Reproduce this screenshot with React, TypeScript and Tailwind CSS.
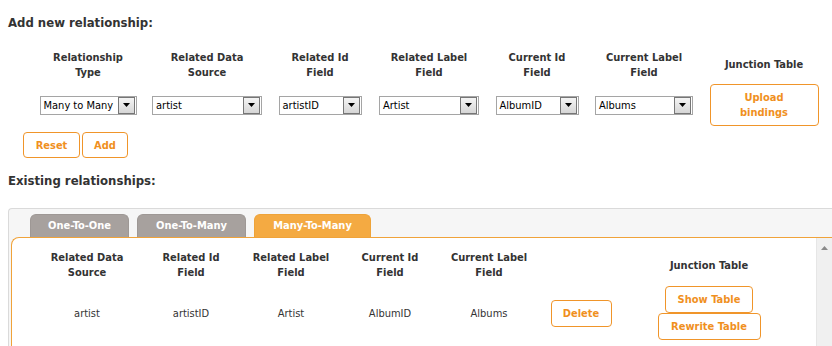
import React from 'react';

const font = { fontFamily: '"DejaVu Sans Condensed", "DejaVu Sans", Tahoma, sans-serif' };

const formCols = [
  { label: ['Relationship', 'Type'], w: 'w-[116px]', sel: 'w-[97px]', value: 'Many to Many' },
  { label: ['Related Data', 'Source'], w: 'w-[122px]', sel: 'w-[110px]', value: 'artist' },
  { label: ['Related Id', 'Field'], w: 'w-[104px]', sel: 'w-[83px]', value: 'artistID' },
  { label: ['Related Label', 'Field'], w: 'w-[114px]', sel: 'w-[100px]', value: 'Artist' },
  { label: ['Current Id', 'Field'], w: 'w-[102px]', sel: 'w-[83px]', value: 'AlbumID' },
  { label: ['Current Label', 'Field'], w: 'w-[112px]', sel: 'w-[98px]', value: 'Albums' },
];

const listCols = [
  { label: ['Related Data', 'Source'], w: 'w-[104px]', value: 'artist' },
  { label: ['Related Id', 'Field'], w: 'w-[104px]', value: 'artistID' },
  { label: ['Related Label', 'Field'], w: 'w-[96px]', value: 'Artist' },
  { label: ['Current Id', 'Field'], w: 'w-[102px]', value: 'AlbumID' },
  { label: ['Current Label', 'Field'], w: 'w-[96px]', value: 'Albums' },
];

const OrangeButton = ({ children, className = '' }: { children: React.ReactNode; className?: string }) => (
  <button
    className={`rounded-[4px] border border-[#f0952a] bg-white text-[11px] font-bold leading-[15px] text-[#f0901e] ${className}`}
  >
    {children}
  </button>
);

const FakeSelect = ({ value, width }: { value: string; width: string }) => (
  <div className={`flex h-[19px] items-center border border-[#a5a5a5] bg-white ${width}`}>
    <span className="flex-1 truncate pl-[3px] text-[11px] leading-[15px] text-black">{value}</span>
    <span className="mr-px flex h-[17px] w-[17px] items-center justify-center border border-[#767676] bg-gradient-to-b from-[#f4f4f4] to-[#d6d6d6]">
      <svg width="7" height="4" viewBox="0 0 7 4">
        <path d="M0 0h7L3.5 4z" fill="#000" />
      </svg>
    </span>
  </div>
);

const Header = ({ lines }: { lines: string[] }) => (
  <div className="text-center text-[11px] font-bold leading-[15px] text-[#333]">
    {lines.map((l) => (
      <div key={l}>{l}</div>
    ))}
  </div>
);

const Tab = ({ label, active }: { label: string; active?: boolean }) => (
  <div
    className={`flex h-[23px] items-center justify-center rounded-t-[6px] border border-b-0 text-[11px] font-bold text-white ${
      active ? 'w-[117px] border-[#eea339] bg-[#f4aa42]' : 'border-[#9e9895] bg-[#a7a19e]'
    }`}
  >
    {label}
  </div>
);

export default function App() {
  return (
    <div className="h-[346px] w-[832px] overflow-hidden bg-white text-[#333]" style={font}>
      <h2 className="pl-2 pt-[15px] text-[13px] font-bold leading-[16px] text-[#333]">Add new relationship:</h2>

      {/* Form */}
      <div className="mt-[18px] pl-[30px]">
        <div className="flex h-[32px] items-center">
          {formCols.map((c) => (
            <div key={c.label.join()} className={`${c.w} flex justify-center`}>
              <Header lines={c.label} />
            </div>
          ))}
          <div className="-mt-[2px] flex w-[128px] justify-center">
            <Header lines={['Junction Table']} />
          </div>
        </div>
        <div className="mt-[3px] flex h-[42px] items-center">
          {formCols.map((c) => (
            <div key={c.value} className={`${c.w} flex justify-center`}>
              <FakeSelect value={c.value} width={c.sel} />
            </div>
          ))}
          <div className="flex w-[128px] justify-center">
            <OrangeButton className="h-[42px] w-[109px] py-1">
              Upload
              <br />
              bindings
            </OrangeButton>
          </div>
        </div>
      </div>

      <div className="mt-[6px] flex gap-[2px] pl-[23px]">
        <OrangeButton className="h-[26px] w-[57px]">Reset</OrangeButton>
        <OrangeButton className="h-[26px] w-[46px]">Add</OrangeButton>
      </div>

      <h2 className="mt-[15px] pl-2 text-[13px] font-bold leading-[16px] text-[#333]">Existing relationships:</h2>

      {/* Tabs */}
      <div className="ml-2 mt-[19px] rounded-tl-[4px] border-l border-t border-[#dadada] bg-[#f6f6f6] pl-[2px] pt-[5px]">
        <div className="flex gap-[8px] pl-[19px]">
          <div className="w-[99px]">
            <Tab label="One-To-One" />
          </div>
          <div className="w-[109px]">
            <Tab label="One-To-Many" />
          </div>
          <Tab label="Many-To-Many" active />
        </div>
        <div className="flex h-[120px] rounded-tl-[8px] border-l border-t border-[#f0a33a] bg-white">
          <div className="flex-1 pl-[23px]">
            <div className="flex h-[42px] items-end">
              {listCols.map((c) => (
                <div key={c.value} className={`${c.w} flex justify-center`}>
                  <Header lines={c.label} />
                </div>
              ))}
              <div className="w-[88px]" />
              <div className="flex h-[30px] w-[168px] items-center justify-center">
                <Header lines={['Junction Table']} />
              </div>
            </div>
            <div className="mt-[6px] flex h-[54px] items-center">
              {listCols.map((c) => (
                <div key={c.value} className={`${c.w} text-center text-[11px] leading-[15px] text-[#333]`}>
                  {c.value}
                </div>
              ))}
              <div className="flex w-[88px] justify-center">
                <OrangeButton className="h-[27px] w-[61px]">Delete</OrangeButton>
              </div>
              <div className="flex w-[168px] flex-col items-center">
                <OrangeButton className="h-[27px] w-[88px]">Show Table</OrangeButton>
                <OrangeButton className="h-[27px] w-[103px]">Rewrite Table</OrangeButton>
              </div>
            </div>
          </div>
          {/* Scrollbar */}
          <div className="flex w-[16px] justify-center border-l border-[#e6e6e6] bg-[#f0f0f0] pt-[8px]">
            <svg width="7" height="4" viewBox="0 0 7 4">
              <path d="M0 4h7L3.5 0z" fill="#8a8a8a" />
            </svg>
          </div>
        </div>
      </div>
    </div>
  );
}
